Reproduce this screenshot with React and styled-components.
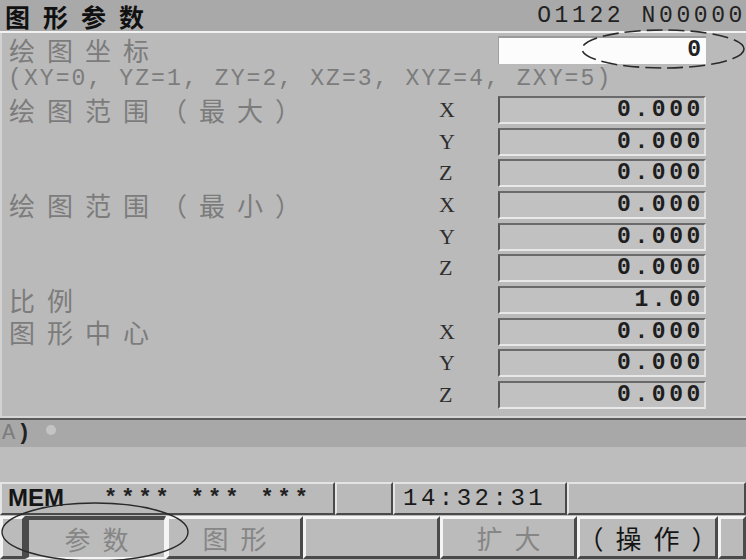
import React from "react";
import styled, { createGlobalStyle } from "styled-components";

const GlobalStyle = createGlobalStyle`
  html, body {
    margin: 0;
    padding: 0;
    background: #bababa;
  }
`;

const cjk = `"Noto Sans CJK SC", "Noto Sans", sans-serif`;
const mono = `"Liberation Mono", "DejaVu Sans Mono", monospace`;

const Screen = styled.div`
  position: relative;
  width: 746px;
  height: 560px;
  overflow: hidden;
  background: #bababa;
  display: flex;
  flex-direction: column;
`;

const TitleBar = styled.div`
  height: 31px;
  flex: none;
  display: flex;
  align-items: center;
  justify-content: space-between;
  background: #a9a9a9;
  border-bottom: 2px solid #f2f2f2;
`;

const Title = styled.div`
  font-family: ${cjk};
  font-weight: 700;
  font-size: 25px;
  letter-spacing: 13px;
  color: #111;
  padding-left: 5px;
  line-height: 30px;
`;

const ProgNo = styled.div`
  font-family: ${mono};
  font-size: 23px;
  letter-spacing: 3.6px;
  color: #222;
  white-space: nowrap;
  line-height: 28px;
`;

const Main = styled.div`
  flex: none;
  height: 385px;
  box-sizing: border-box;
  padding: 3px 0 5px 8px;
  border-left: 2px solid #d2d2d2;
  border-bottom: 2px solid #d6d6d6;
  display: flex;
  flex-direction: column;
`;

const Label = styled.div`
  font-family: ${cjk};
  font-size: 26px;
  letter-spacing: 12px;
  color: #7c7c7c;
  white-space: nowrap;
  align-self: center;
  line-height: 28px;
  margin-left: -1px;
`;

const CoordRow = styled.div`
  height: 28px;
  display: grid;
  grid-template-columns: 488px 208px;
  align-items: stretch;
`;

const InputBox = styled.div`
  background: #fcfcfc;
  border-top: 2px solid #9a9a9a;
  border-left: 1px solid #a0a0a0;
  box-sizing: border-box;
  font-family: ${mono};
  font-weight: 700;
  font-size: 23px;
  color: #222;
  text-align: right;
  padding-right: 5px;
  line-height: 25px;
  font-variant-numeric: slashed-zero;
`;

const Hint = styled.div`
  height: 32px;
  font-family: ${mono};
  font-size: 23px;
  letter-spacing: 2.1px;
  color: #7c7c7c;
  line-height: 30px;
  margin-left: -2px;
  white-space: nowrap;
  font-variant-numeric: slashed-zero;
`;

const ParamGrid = styled.div`
  display: grid;
  grid-template-columns: 420px 68px 208px;
  grid-auto-rows: 31.7px;
`;

const Axis = styled.div`
  font-family: "Liberation Serif", serif;
  font-size: 22px;
  color: #2e2e2e;
  align-self: center;
  padding-left: 9px;
`;

const Field = styled.div`
  align-self: center;
  height: 28px;
  box-sizing: border-box;
  background: #c1c1c1;
  border-top: 2px solid #6a6a6a;
  border-left: 2px solid #555;
  border-right: 2px solid #e2e2e2;
  border-bottom: 2px solid #e8e8e8;
  font-family: ${mono};
  font-weight: 700;
  font-size: 23px;
  letter-spacing: 3.6px;
  color: #1e1e1e;
  text-align: right;
  line-height: 24px;
  font-variant-numeric: slashed-zero;
`;

const InputLine = styled.div`
  flex: none;
  height: 27px;
  border-top: 2px solid #5a5a5a;
  background: #a8a8a8;
  display: flex;
  align-items: center;
  gap: 14px;
  padding-left: 2px;
`;

const Prompt = styled.span`
  font-family: ${mono};
  font-size: 22px;
  color: #7c7c7c;
  letter-spacing: 2px;
`;

const Bracket = styled.span`
  color: #222;
  font-weight: 700;
`;

const Cursor = styled.span`
  width: 10px;
  height: 10px;
  border-radius: 50%;
  background: #c4c4c4;
  margin-top: -8px;
`;

const MessageBand = styled.div`
  flex: none;
  height: 35px;
  background: #bdbdbd;
`;

const StatusBar = styled.div`
  flex: none;
  height: 33px;
  display: grid;
  grid-template-columns: 335px 58px 174px 1fr;
`;

const StatusCell = styled.div`
  box-sizing: border-box;
  border-top: 2px solid #e4e4e4;
  border-left: 2px solid #e4e4e4;
  border-right: 2px solid #4a4a4a;
  border-bottom: 2px solid #4a4a4a;
  background: #bababa;
  display: flex;
  align-items: center;
  padding-left: ${(p) => p.$pad || 0}px;
  white-space: nowrap;
  overflow: hidden;
`;

const Mem = styled.span`
  font-family: "Liberation Sans", Arial, sans-serif;
  font-weight: 700;
  font-size: 24px;
  color: #151515;
  margin-right: 40px;
  margin-top: -2px;
`;

const Stars = styled.span`
  font-family: ${mono};
  font-weight: 700;
  font-size: 22px;
  letter-spacing: 4px;
  color: #222;
  margin-right: 18px;
`;

const Clock = styled.span`
  font-family: ${mono};
  font-size: 24px;
  letter-spacing: 3.5px;
  color: #1a1a1a;
`;

const SoftKeys = styled.div`
  flex: 1;
  display: grid;
  grid-template-columns: 25px 141px 137px 137px 137px 141px 1fr;
  padding: 1px 0 5px;
  box-sizing: border-box;
`;

const SoftKey = styled.div`
  box-sizing: border-box;
  background: #bbbbbb;
  border-style: solid;
  border-width: ${(p) => (p.$pressed ? "4px 2px 2px 4px" : "3px 3px 3px 3px")};
  border-color: ${(p) =>
    p.$pressed
      ? "#4a4a4a #f4f4f4 #f4f4f4 #4a4a4a"
      : "#f4f4f4 #4a4a4a #4a4a4a #f4f4f4"};
  display: flex;
  align-items: center;
  justify-content: center;
  font-family: ${cjk};
  font-size: 26px;
  letter-spacing: 12px;
  color: ${(p) => (p.$dark ? "#151515" : "#868686")};
  padding-left: 12px;
  white-space: nowrap;
`;

const Annotations = styled.svg`
  position: absolute;
  left: 0;
  top: 0;
  pointer-events: none;
`;

const rows = [
  { label: "绘图范围（最大）", axis: "X", value: "0.000" },
  { label: "", axis: "Y", value: "0.000" },
  { label: "", axis: "Z", value: "0.000" },
  { label: "绘图范围（最小）", axis: "X", value: "0.000" },
  { label: "", axis: "Y", value: "0.000" },
  { label: "", axis: "Z", value: "0.000" },
  { label: "比例", axis: "", value: "1.00" },
  { label: "图形中心", axis: "X", value: "0.000" },
  { label: "", axis: "Y", value: "0.000" },
  { label: "", axis: "Z", value: "0.000" },
];

const keys = [
  { text: "" },
  { text: "参数", pressed: true },
  { text: "图形" },
  { text: "" },
  { text: "扩大" },
  { text: "（操作）", dark: true },
  { text: "" },
];

export default function App() {
  return (
    <Screen>
      <GlobalStyle />
      <TitleBar>
        <Title>图形参数</Title>
        <ProgNo>O1122 N00000</ProgNo>
      </TitleBar>

      <Main>
        <CoordRow>
          <Label>绘图坐标</Label>
          <InputBox>0</InputBox>
        </CoordRow>
        <Hint>(XY=0, YZ=1, ZY=2, XZ=3, XYZ=4, ZXY=5)</Hint>
        <ParamGrid>
          {rows.map((r, i) => (
            <React.Fragment key={i}>
              <Label>{r.label}</Label>
              <Axis>{r.axis}</Axis>
              <Field>{r.value}</Field>
            </React.Fragment>
          ))}
        </ParamGrid>
      </Main>

      <InputLine>
        <Prompt>
          A<Bracket>)</Bracket>
        </Prompt>
        <Cursor />
      </InputLine>
      <MessageBand />

      <StatusBar>
        <StatusCell $pad={6}>
          <Mem>MEM</Mem>
          <Stars>****</Stars>
          <Stars>***</Stars>
          <Stars>***</Stars>
        </StatusCell>
        <StatusCell />
        <StatusCell $pad={8}>
          <Clock>14:32:31</Clock>
        </StatusCell>
        <StatusCell />
      </StatusBar>

      <SoftKeys>
        {keys.map((k, i) => (
          <SoftKey key={i} $pressed={k.pressed} $dark={k.dark}>
            {k.text}
          </SoftKey>
        ))}
      </SoftKeys>

      <Annotations width="746" height="560" viewBox="0 0 746 560">
        <ellipse
          cx="663"
          cy="49"
          rx="81"
          ry="19"
          fill="none"
          stroke="#2a2a2a"
          strokeWidth="1.6"
          strokeDasharray="16 6"
        />
        <ellipse
          cx="95"
          cy="532"
          rx="93"
          ry="29"
          fill="none"
          stroke="#2a2a2a"
          strokeWidth="1.4"
        />
      </Annotations>
    </Screen>
  );
}
